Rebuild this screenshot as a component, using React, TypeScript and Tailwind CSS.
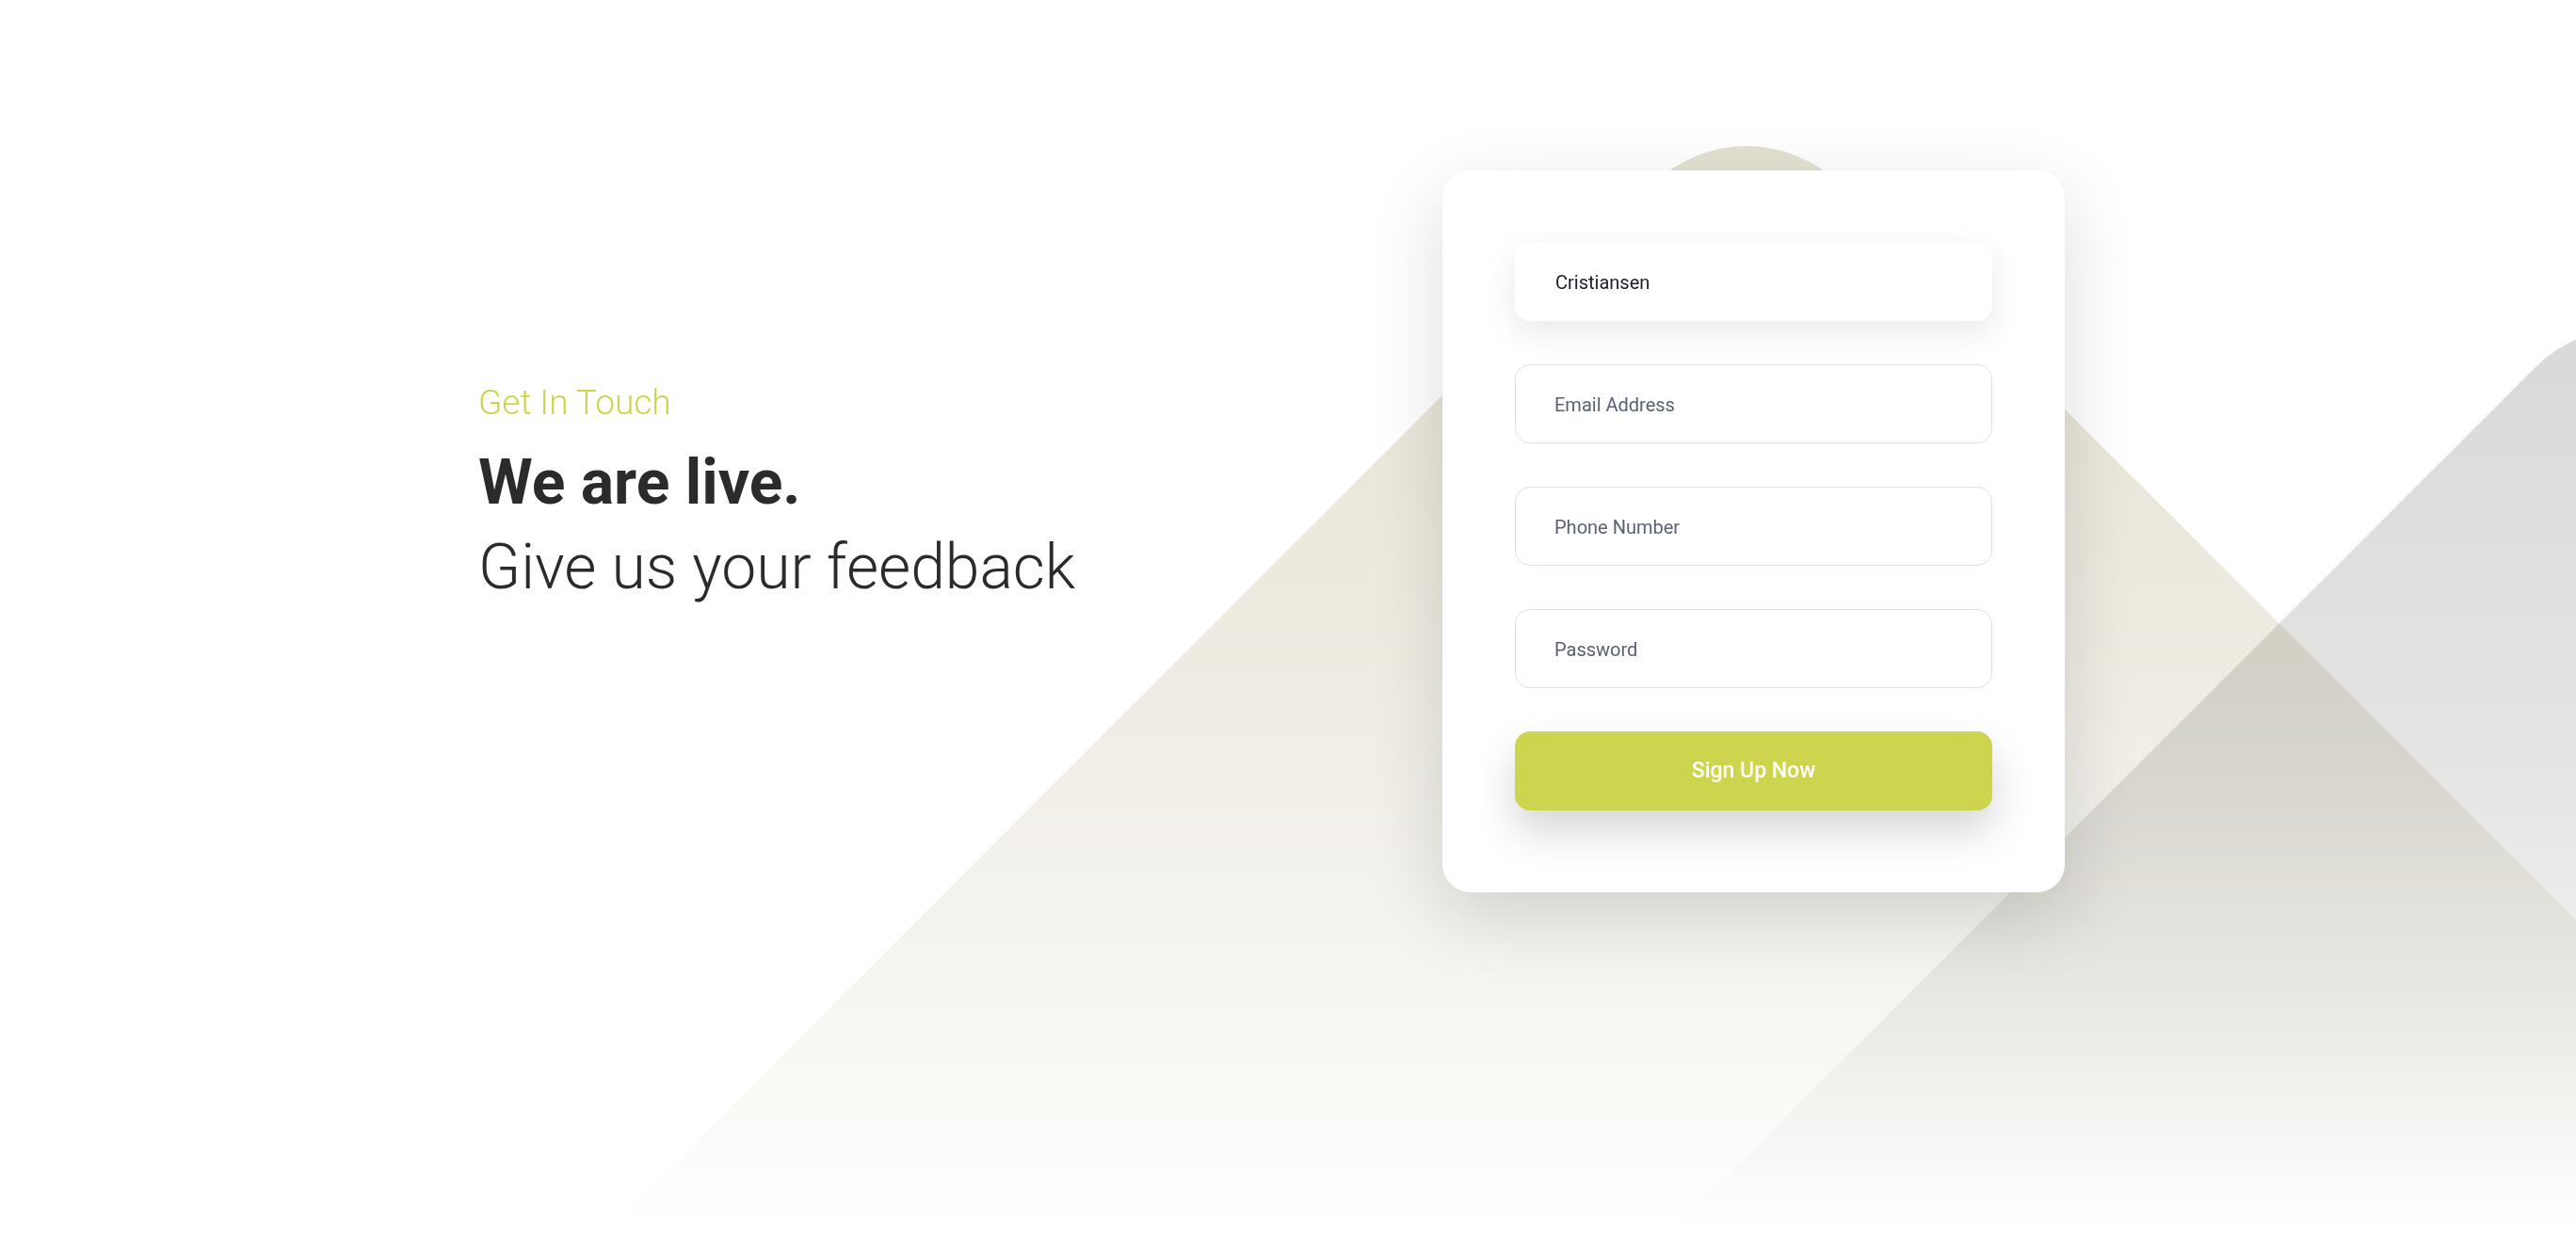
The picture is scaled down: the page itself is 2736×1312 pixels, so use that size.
import React from 'react';

const Backdrop = () => (
  <svg className="absolute inset-0 w-full h-full pointer-events-none" viewBox="0 0 2736 1312" preserveAspectRatio="none">
    <defs>
      <linearGradient id="beige" gradientUnits="userSpaceOnUse" x1="0" y1="150" x2="0" y2="1312">
        <stop offset="0" stopColor="#e4e0d1" />
        <stop offset="0.47" stopColor="#eeebe2" />
        <stop offset="0.75" stopColor="#f5f4ef" />
        <stop offset="0.93" stopColor="#fcfcfa" />
        <stop offset="1" stopColor="#ffffff" />
      </linearGradient>
      <linearGradient id="grey" gradientUnits="userSpaceOnUse" x1="0" y1="300" x2="0" y2="1312">
        <stop offset="0" stopColor="#d8d8d8" />
        <stop offset="0.5" stopColor="#e4e4e2" />
        <stop offset="0.9" stopColor="#fafafa" />
        <stop offset="1" stopColor="#ffffff" />
      </linearGradient>
    </defs>
    <path d="M 552 1400 L 1756 196 A 140 140 0 0 1 1954 196 L 3159 1400 Z" fill="url(#beige)" />
    <path d="M 1683 1400 L 2693 390 A 140 140 0 0 1 2891 390 L 4000 1500 Z" fill="url(#grey)" style={{ mixBlendMode: 'multiply' }} />
  </svg>
);

const Field = ({ label }: { label: string }) => (
  <div className="h-[84px] w-full rounded-[16px] border-[1.5px] border-[#e0e0ea] bg-white flex items-center px-[41px] pt-[2px] text-[20px] text-[#5b6072]">
    {label}
  </div>
);

export default function App() {
  return (
    <div className="relative w-full h-[1312px] overflow-hidden bg-white font-['Roboto',sans-serif]">
      <Backdrop />

      <div className="relative z-10 flex items-start pt-[181px] pl-[508px]">
        {/* Headline */}
        <div className="w-[1024px] pt-[225px] text-[#2b2b2b]">
          <p className="text-[37px] leading-[43px] font-light text-[#cdd44e]">Get In Touch</p>
          <h1 className="mt-[19px] text-[66px] leading-[90px] font-bold">We are live.</h1>
          <p className="text-[66px] leading-[90px] font-light">Give us your feedback</p>
        </div>

        {/* Form card */}
        <div className="w-[661px] h-[767px] rounded-[30px] bg-white shadow-[0_25px_80px_rgba(0,0,0,0.14)] px-[77px] pt-[76px] flex flex-col gap-[46px]">
          <div className="h-[84px] w-full rounded-[16px] bg-white shadow-[0_12px_34px_rgba(0,0,0,0.09)] flex items-center px-[43px] pt-[2px] text-[20px] text-[#1d1d28]">
            Cristiansen
          </div>
          <Field label="Email Address" />
          <Field label="Phone Number" />
          <Field label="Password" />
          <button className="h-[84px] w-full rounded-[16px] bg-[#cdd44e] text-white text-[23px] font-medium shadow-[0_22px_44px_rgba(0,0,0,0.17)]">
            Sign Up Now
          </button>
        </div>
      </div>
    </div>
  );
}
